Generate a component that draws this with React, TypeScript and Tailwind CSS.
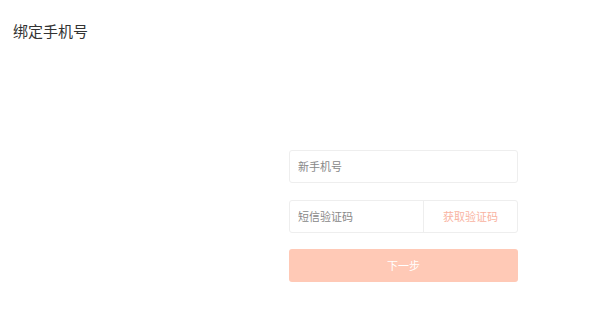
export default function App() {
    const font = { fontFamily: '"Noto Sans CJK SC", "Liberation Sans", sans-serif' };

    return (
        <div className="w-[600px] h-[323px] bg-white" style={font}>
            <div className="pl-[13px] pt-[21px]">
                <h1 className="text-[15px] leading-[20px] text-[#333333]">绑定手机号</h1>
            </div>

            <div className="ml-[289px] mt-[109px] w-[229px] flex flex-col">
                <div className="h-[33px] border border-[#eeeeee] rounded-[3px] flex items-center px-[8px]">
                    <input
                        className="w-full outline-none text-[11px] text-[#333] placeholder:text-[#888888] bg-transparent"
                        placeholder="新手机号"
                    />
                </div>

                <div className="mt-[17px] h-[33px] border border-[#eeeeee] rounded-[3px] flex">
                    <div className="w-[134px] flex items-center px-[8px] border-r border-[#eeeeee]">
                        <input
                            className="w-full outline-none text-[11px] text-[#333] placeholder:text-[#888888] bg-transparent"
                            placeholder="短信验证码"
                        />
                    </div>
                    <button className="flex-1 flex items-center justify-center text-[11px] text-[#f9b3a1]">
                        获取验证码
                    </button>
                </div>

                <button className="mt-[16px] h-[33px] rounded-[3px] bg-[#ffc9b6] text-white text-[11px] flex items-center justify-center">
                    下一步
                </button>
            </div>
        </div>
    );
}
